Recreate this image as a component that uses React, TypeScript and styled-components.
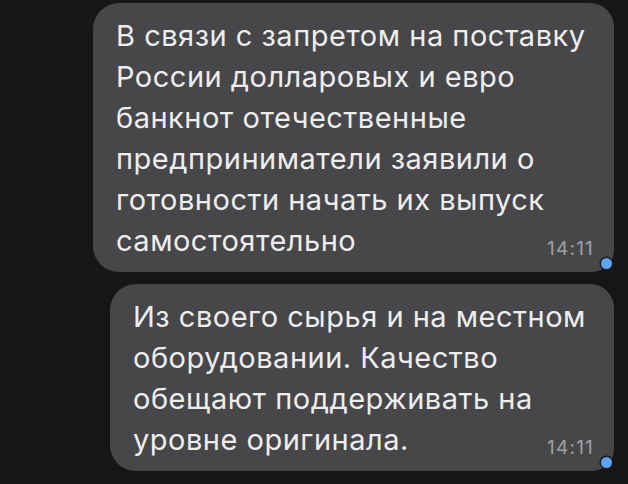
import React from "react";
import styled, { createGlobalStyle } from "styled-components";

const GlobalStyle = createGlobalStyle`
  html, body {
    margin: 0;
    padding: 0;
    background: #161618;
  }
  body {
    font-family: Inter, "Noto Sans", sans-serif;
  }
`;

type IMessage = {
  lines: string[];
  time: string;
  width: number;
};

const messages: IMessage[] = [
  {
    lines: [
      "В связи с запретом на поставку",
      "России долларовых и евро",
      "банкнот отечественные",
      "предприниматели заявили о",
      "готовности начать их выпуск",
      "самостоятельно",
    ],
    time: "14:11",
    width: 521,
  },
  {
    lines: [
      "Из своего сырья и на местном",
      "оборудовании. Качество",
      "обещают поддерживать на",
      "уровне оригинала.",
    ],
    time: "14:11",
    width: 504,
  },
];

const Screen = styled.div`
  width: 628px;
  height: 484px;
  overflow: hidden;
  background: #161618;
  display: flex;
  flex-direction: column;
  align-items: flex-end;
  gap: 12px;
  padding: 3px 14px 0 0;
  box-sizing: border-box;
`;

const Bubble = styled.div<{ $width: number }>`
  position: relative;
  width: ${(p) => p.$width}px;
  box-sizing: border-box;
  background: #47474a;
  border-radius: 26px 24px 22px 26px;
  padding: 12px 20px 11px 23px;
  color: #ededed;
  font-size: 29px;
  line-height: 41px;
  letter-spacing: 0.5px;
`;

const Line = styled.div`
  white-space: nowrap;
`;

const LastRow = styled.div`
  display: flex;
  justify-content: space-between;
  align-items: baseline;
`;

const Time = styled.span`
  font-size: 19px;
  line-height: 20px;
  letter-spacing: 1.2px;
  color: #a0a0a3;
  position: relative;
  top: 4px;
`;

const Dot = styled.span`
  position: absolute;
  right: 2px;
  bottom: 3px;
  width: 11px;
  height: 11px;
  border-radius: 50%;
  background: #5da3f0;
  box-shadow: 0 0 0 1.5px #1c1c1f;
`;

const Message = ({ lines, time, width }: IMessage) => {
  const body = lines.slice(0, -1);
  const last = lines[lines.length - 1];
  return (
    <Bubble $width={width}>
      {body.map((l, i) => (
        <Line key={i}>{l}</Line>
      ))}
      <LastRow>
        <Line>{last}</Line>
        <Time>{time}</Time>
      </LastRow>
      <Dot />
    </Bubble>
  );
};

const App = () => {
  return (
    <>
      <GlobalStyle />
      <Screen>
        {messages.map((m, i) => (
          <Message key={i} {...m} />
        ))}
      </Screen>
    </>
  );
};

export default App;
